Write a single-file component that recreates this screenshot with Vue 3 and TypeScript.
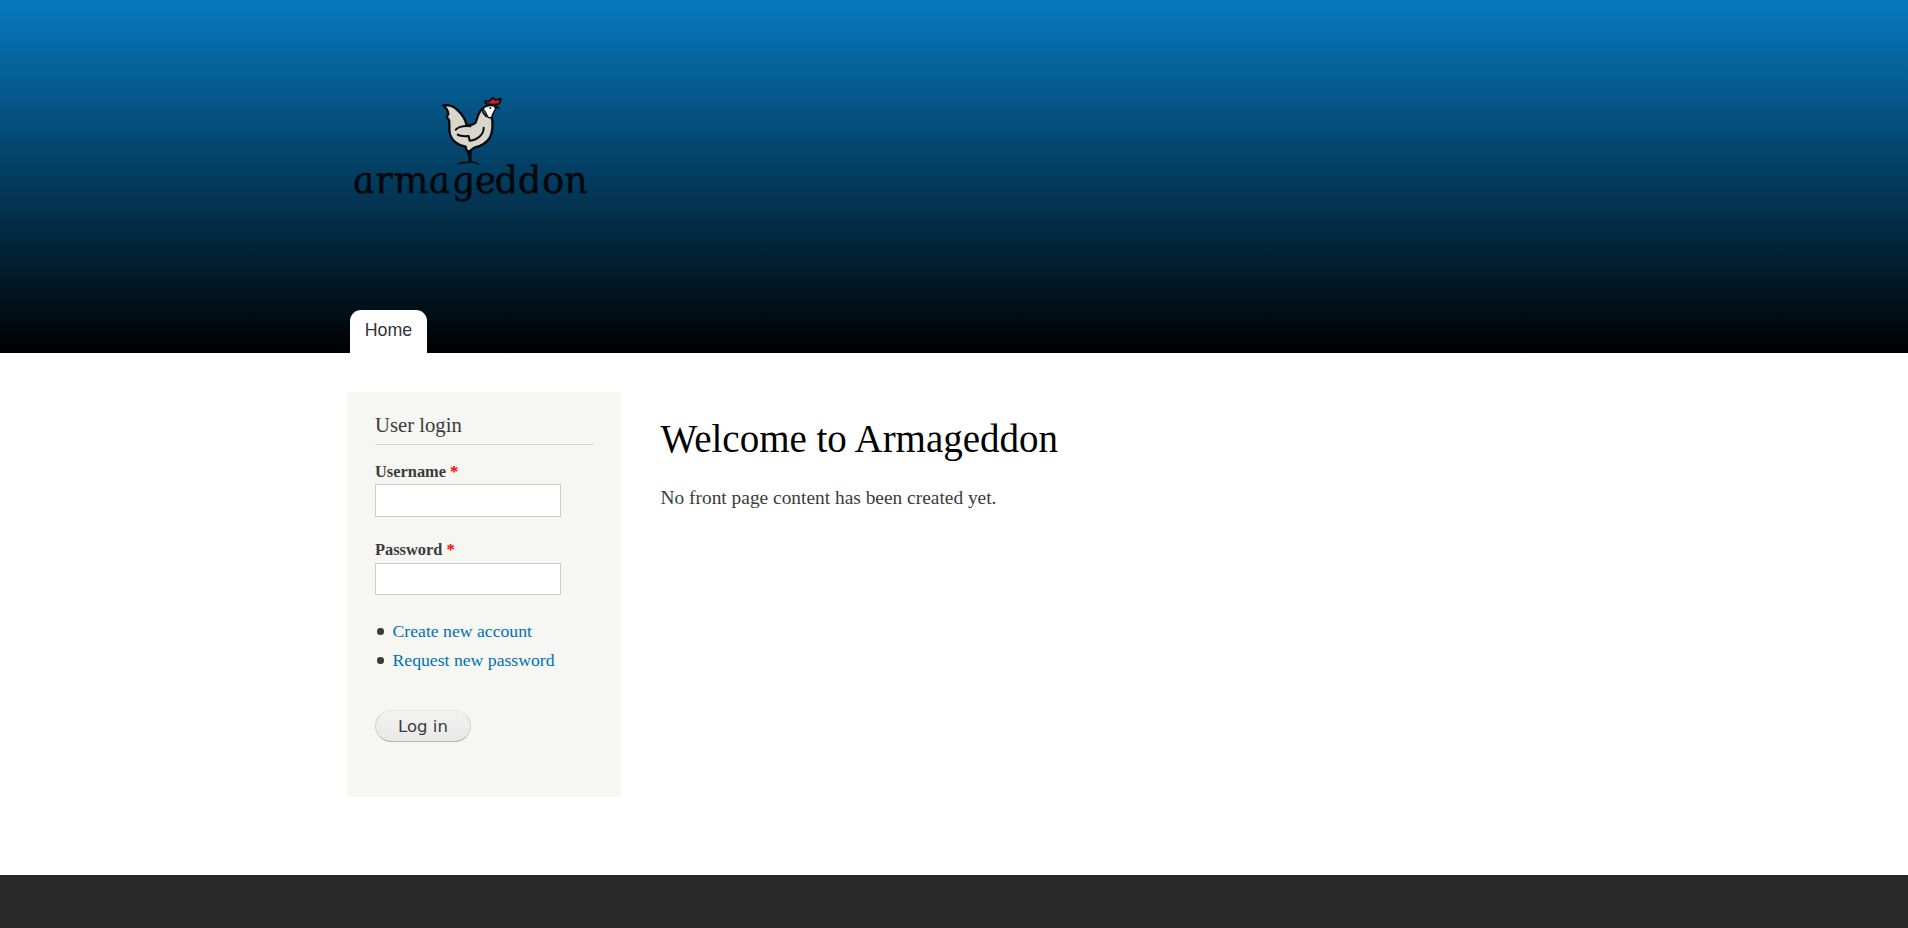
<script setup lang="ts">
import { ref } from 'vue'

interface Field {
  id: string
  label: string
  type: string
}

const fields: Field[] = [
  { id: 'name', label: 'Username', type: 'text' },
  { id: 'pass', label: 'Password', type: 'password' },
]
const values = ref<Record<string, string>>({ name: '', pass: '' })
const links: string[] = ['Create new account', 'Request new password']
</script>

<template>
  <div class="page">
    <header class="header">
      <a class="logo" aria-label="armageddon">
        <svg width="260" height="140" viewBox="0 0 780 420">
          <g stroke="#080b10" stroke-width="7" stroke-linejoin="round" stroke-linecap="round">
            <path
              fill="#d9d6cc"
              d="M309 76 C326 74 341 79 351 89 C366 102 377 121 380 137 C391 134 399 136 406 129 C413 115 413 99 427 86 C437 77 451 75 461 80 L455 112 C460 130 458 157 449 174 C439 189 421 199 405 202 C399 203 395 211 386 216 C380 213 377 207 377 200 C354 197 333 181 329 158 C326 142 330 130 327 120 L320 111 L325 102 C324 94 320 84 309 76 Z"
            />
            <path fill="#fff" stroke-width="4" d="M431 83 C442 76 457 75 468 81 C467 89 460 96 457 105 C456 112 450 116 444 111 C438 105 440 97 431 90 Z" />
            <path fill="#c52329" stroke-width="5" d="M438 71 L435 63 L447 64 L459 53 L466 60 L483 56 L477 72 C465 75 449 73 438 71 Z" />
            <path fill="#080b10" stroke-width="3" d="M467 76 L479 84 L465 84 Z" />
            <path fill="#080b10" stroke-width="3" d="M427 89 C428 98 438 100 439 112 L429 100 Z" />
            <path fill="none" stroke-width="6" d="M347 149 C358 139 375 137 391 139 M353 164 C361 169 372 169 386 168 L389 182 C412 181 432 163 431 143" />
            <path fill="#080b10" stroke-width="4" d="M382 214 L387 233 L388 245 L393 245 L393 211 Z" />
            <path fill="none" stroke-width="5" d="M355 251 C367 246 380 250 393 245 C400 247 407 248 415 252" />
          </g>
          <circle cx="451" cy="84" r="3" fill="#101419" />
          <text class="wordmark" transform="translate(44 338) skewX(11)" dx="0 2 2 1 2 1 -4 -1 0 0" textLength="705" lengthAdjust="spacingAndGlyphs">armageddon</text>
        </svg>
      </a>
      <nav class="tabs"><a class="tab">Home</a></nav>
    </header>

    <main class="main">
      <aside class="sidebar">
        <h2>User login</h2>
        <form @submit.prevent>
          <div v-for="field in fields" :key="field.id" class="field">
            <label :for="field.id">{{ field.label }} <span class="required">*</span></label>
            <input :id="field.id" v-model="values[field.id]" :type="field.type" />
          </div>
          <ul>
            <li v-for="link in links" :key="link"><a>{{ link }}</a></li>
          </ul>
          <button type="submit">Log in</button>
        </form>
      </aside>
      <section class="content">
        <h1>Welcome to Armageddon</h1>
        <p>No front page content has been created yet.</p>
      </section>
    </main>

    <footer class="footer"></footer>
  </div>
</template>

<style>
body {
  margin: 0;
  background: #fff;
}
</style>

<style scoped>
* {
  box-sizing: border-box;
}
.page {
  display: flex;
  flex-direction: column;
  height: 928px;
  overflow: hidden;
  color: #3b3b3b;
  font-family: "Liberation Serif", serif;
}
.header {
  display: flex;
  flex-direction: column;
  justify-content: space-between;
  height: 353px;
  padding: 80px 340px 0;
  background: linear-gradient(to bottom, #0779bf 0%, #000 100%);
}
.logo,
.logo svg {
  display: block;
}
.logo {
  width: 260px;
}
.wordmark {
  font: italic 113px "DejaVu Serif", serif;
  fill: #05080c;
  stroke: #05080c;
  stroke-width: 1.5;
}
.tabs {
  display: flex;
  padding-left: 10px;
}
.tab {
  width: 77px;
  height: 43px;
  border-radius: 11px 11px 0 0;
  background: #fff;
  color: #333;
  font: 17.8px/40px "Liberation Sans", sans-serif;
  text-align: center;
}
.main {
  display: flex;
  gap: 39px;
  height: 522px;
  padding: 39px 347px 0;
}
.sidebar {
  flex: none;
  width: 274px;
  height: 405px;
  padding: 20px 27px 0 28px;
  background: #f6f6f2;
}
h2 {
  height: 33px;
  margin: 0 0 15px;
  border-bottom: 1px solid #d3d7d9;
  font-size: 20.7px;
  font-weight: normal;
  line-height: 27px;
}
.field {
  height: 79px;
}
.field + .field {
  height: 78px;
}
label {
  display: block;
  height: 24px;
  font-size: 16.4px;
  font-weight: bold;
  line-height: 23px;
}
.field + .field label {
  line-height: 21px;
}
.field + .field input {
  height: 32px;
}
.required {
  color: #f00;
}
input {
  display: block;
  width: 186px;
  height: 33px;
  padding: 4px;
  border: 1px solid #ccc;
  outline: none;
  background: #fff;
}
ul {
  margin: 0 0 35px;
  padding: 0;
  list-style: none;
}
li {
  display: flex;
  align-items: center;
  gap: 9px;
  height: 29px;
  padding-left: 2px;
  font-size: 17.7px;
}
li::before {
  content: "";
  width: 6.5px;
  height: 6.5px;
  border-radius: 50%;
  background: #3b3b3b;
}
li a {
  color: #0071b3;
}
button {
  display: block;
  width: 96px;
  height: 32px;
  padding: 1px 0 0;
  border: 1px solid #e4e4e4;
  border-right-color: #d2d2d2;
  border-bottom-color: #b4b4b4;
  border-left-color: #d2d2d2;
  border-radius: 16px;
  background: linear-gradient(#f3f3f3, #e8e8e8);
  color: #3a3a3a;
  font: 16.5px/29px "DejaVu Sans", sans-serif;
}
.content {
  padding-left: 0.5px;
}
h1 {
  margin: 24px 0 0;
  color: #000;
  font-size: 39px;
  font-weight: normal;
  line-height: 45px;
}
p {
  margin: 23px 0 0;
  font-size: 19.4px;
  line-height: 28px;
}
.footer {
  flex: 1;
  background: #292929;
}
</style>
